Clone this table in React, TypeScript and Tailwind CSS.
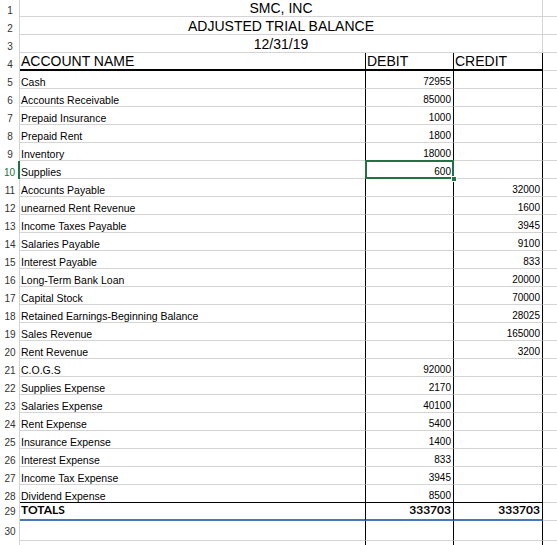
import React from 'react';

type Row = { name: string; debit?: string; credit?: string };

const ROWS: Row[] = [
  { name: 'Cash', debit: '72955' },
  { name: 'Accounts Receivable', debit: '85000' },
  { name: 'Prepaid Insurance', debit: '1000' },
  { name: 'Prepaid Rent', debit: '1800' },
  { name: 'Inventory', debit: '18000' },
  { name: 'Supplies', debit: '600' },
  { name: 'Acocunts Payable', credit: '32000' },
  { name: 'unearned Rent Revenue', credit: '1600' },
  { name: 'Income Taxes Payable', credit: '3945' },
  { name: 'Salaries Payable', credit: '9100' },
  { name: 'Interest Payable', credit: '833' },
  { name: 'Long-Term Bank Loan', credit: '20000' },
  { name: 'Capital Stock', credit: '70000' },
  { name: 'Retained Earnings-Beginning Balance', credit: '28025' },
  { name: 'Sales Revenue', credit: '165000' },
  { name: 'Rent Revenue', credit: '3200' },
  { name: 'C.O.G.S', debit: '92000' },
  { name: 'Supplies Expense', debit: '2170' },
  { name: 'Salaries Expense', debit: '40100' },
  { name: 'Rent Expense', debit: '5400' },
  { name: 'Insurance Expense', debit: '1400' },
  { name: 'Interest Expense', debit: '833' },
  { name: 'Income Tax Expense', debit: '3945' },
  { name: 'Dividend Expense', debit: '8500' },
];

const FONT = { fontFamily: '"Liberation Sans", Arial, sans-serif' };
const BOLD_FONT = { fontFamily: 'Lato, "Liberation Sans", sans-serif' };

function RowNum({ n, active, pb = 'pb-0' }: { n?: number; active?: boolean; pb?: string }) {
  return (
    <div
      className={`w-[20px] shrink-0 flex items-end justify-center pl-[1px] ${pb} text-[10px] leading-[12px] border-r ${
        active ? 'text-[#217346] border-r-2 border-[#217346]' : 'text-[#333] border-[#d4d4d4]'
      }`}
    >
      {n}
    </div>
  );
}

function TitleRow({ n, text, h }: { n: number; text: string; h: string }) {
  return (
    <div className={`flex ${h}`}>
      <RowNum n={n} />
      <div className="w-[523px] shrink-0 flex items-end justify-center pb-0 border-b border-r border-[#d4d4d4] text-[14px] leading-[16px] text-black">
        {text}
      </div>
      <div className="flex-1 border-b border-[#d4d4d4]" />
    </div>
  );
}

export default function App() {
  return (
    <div className="w-[557px] h-[545px] overflow-hidden bg-white text-black" style={FONT}>
      <TitleRow n={1} text="SMC, INC" h="h-[17px]" />
      <TitleRow n={2} text="ADJUSTED TRIAL BALANCE" h="h-[18px]" />
      <TitleRow n={3} text="12/31/19" h="h-[18px]" />

      {/* header */}
      <div className="flex h-[18px]">
        <RowNum n={4} />
        <div className="w-[345px] shrink-0 border-b-2 border-black flex items-end pl-[1px] text-[14px] leading-[16px]">
          ACCOUNT NAME
        </div>
        <div className="w-[88px] shrink-0 border-b-2 border-l border-black flex items-end pl-[1px] text-[14px] leading-[16px]">
          DEBIT
        </div>
        <div className="w-[90px] shrink-0 border-b-2 border-l border-r border-black flex items-end pl-[1px] text-[14px] leading-[16px]">
          CREDIT
        </div>
        <div className="flex-1 border-b border-[#d4d4d4]" />
      </div>

      {ROWS.map((r, i) => {
        const n = i + 5;
        const last = n === 28;
        const sel = n === 10;
        const bottom = last ? 'border-b border-b-black' : 'border-b border-b-[#d4d4d4]';
        return (
          <div key={n} className="flex h-[18px]">
            <RowNum n={n} active={sel} />
            <div className={`w-[345px] shrink-0 flex items-end pl-[1px] pb-0 text-[10.5px] leading-[12px] ${bottom}`}>
              {r.name}
            </div>
            <div
              className={`relative w-[88px] shrink-0 flex items-end justify-end pr-[2px] pb-0 text-[10px] leading-[12px] border-l border-l-black ${bottom}`}
            >
              {r.debit}
              {sel && (
                <>
                  <div className="absolute -left-[1px] -top-[1px] -right-[1px] -bottom-[1px] border-2 border-[#217346]" />
                  <div className="absolute -right-[4px] -bottom-[4px] w-[6px] h-[6px] bg-[#217346] border border-white" />
                </>
              )}
            </div>
            <div
              className={`w-[90px] shrink-0 flex items-end justify-end pr-[2px] pb-0 text-[10px] leading-[12px] border-l border-r border-l-black border-r-black ${bottom}`}
            >
              {r.credit}
            </div>
            <div className="flex-1 border-b border-[#d4d4d4]" />
          </div>
        );
      })}

      {/* totals */}
      <div className="flex h-[18px]">
        <RowNum n={29} pb="pb-[3px]" />
        <div
          className="w-[345px] shrink-0 flex items-end pl-[1px] pb-[2px] text-[12px] leading-[14px] font-bold border-b-2 border-[#4a76b8]"
          style={BOLD_FONT}
        >
          TOTALS
        </div>
        <div
          className="w-[88px] shrink-0 flex items-end justify-end pr-[2px] pb-[2px] text-[12px] leading-[14px] font-bold border-l border-l-black border-b-2 border-b-[#4a76b8]"
          style={BOLD_FONT}
        >
          333703
        </div>
        <div
          className="w-[90px] shrink-0 flex items-end justify-end pr-[2px] pb-[2px] text-[12px] leading-[14px] font-bold border-l border-r border-l-black border-r-black border-b-2 border-b-[#4a76b8]"
          style={BOLD_FONT}
        >
          333703
        </div>
        <div className="flex-1 border-b border-[#d4d4d4]" />
      </div>

      {[30, 31].map((n) => (
        <div key={n} className="flex h-[20px]">
          <RowNum n={n === 30 ? n : undefined} pb="pb-[3px]" />
          <div className="w-[345px] shrink-0 border-b border-[#d4d4d4]" />
          <div className="w-[88px] shrink-0 border-l border-l-black border-b border-b-[#d4d4d4]" />
          <div className="w-[90px] shrink-0 border-l border-r border-l-black border-r-black border-b border-b-[#d4d4d4]" />
          <div className="flex-1 border-b border-[#d4d4d4]" />
        </div>
      ))}
    </div>
  );
}
